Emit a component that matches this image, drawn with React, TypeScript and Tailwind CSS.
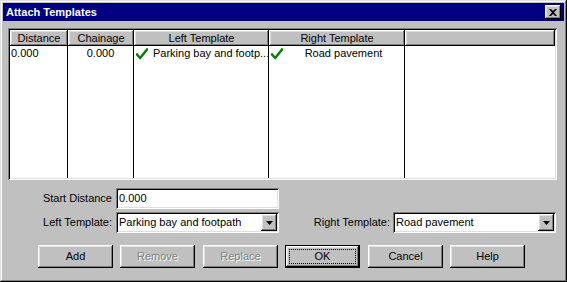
import React from "react";

const raised =
  "shadow-[inset_-1px_-1px_#000,inset_1px_1px_#fff,inset_-2px_-2px_#808080,inset_2px_2px_#dfdfdf]";
const sunken =
  "shadow-[inset_1px_1px_#808080,inset_-1px_-1px_#fff,inset_2px_2px_#000,inset_-2px_-2px_#dfdfdf]";

function Check() {
  return (
    <svg width="12" height="12" viewBox="0 0 12 12" className="shrink-0">
      <path d="M1 6.5 L4.2 10 L11 1.5" fill="none" stroke="#008000" strokeWidth="2.4" strokeLinecap="square" />
    </svg>
  );
}

function Arrow() {
  return (
    <svg width="7" height="4" viewBox="0 0 7 4">
      <path d="M0 0 H7 L3.5 4 Z" fill="#000" />
    </svg>
  );
}

function Combo({ value }: { value: string }) {
  return (
    <div className={`w-[163px] h-[21px] bg-white p-[2px] flex ${sunken}`}>
      <div className="flex-1 pl-[1px] flex items-center leading-none">{value}</div>
      <div className={`w-[16px] h-full bg-[#c0c0c0] flex items-center justify-center ${raised}`}>
        <Arrow />
      </div>
    </div>
  );
}

function Btn({ label, disabled, isDefault, className = "" }: { label: string; disabled?: boolean; isDefault?: boolean; className?: string }) {
  return (
    <div
      className={`relative w-[75px] h-[23px] bg-[#c0c0c0] flex items-center justify-center ${raised} ${
        isDefault ? "border border-black" : ""
      } ${className}`}
    >
      <span className={disabled ? "text-[#808080] [text-shadow:1px_1px_0_#fff]" : ""}>{label}</span>
      {isDefault && <div className="absolute inset-[3px] border border-dotted border-black" />}
    </div>
  );
}

const cols = [
  { name: "Distance", w: "w-[58px]" },
  { name: "Chainage", w: "w-[66px]" },
  { name: "Left Template", w: "w-[135px]" },
  { name: "Right Template", w: "w-[136px]" },
];

export default function App() {
  return (
    <div className="w-[567px] h-[282px] bg-[#c0c0c0] p-[3px] flex flex-col font-['Liberation_Sans',Arial,sans-serif] text-[11px] text-black shadow-[inset_-1px_-1px_#000,inset_1px_1px_#dfdfdf,inset_-2px_-2px_#808080,inset_2px_2px_#fff]">
      {/* title bar */}
      <div className="h-[18px] bg-[#000080] flex items-center justify-between pl-[3px] pr-[3px]">
        <span className="text-white font-bold text-[11px] leading-none">Attach Templates</span>
        <div className={`w-[16px] h-[14px] bg-[#c0c0c0] flex items-center justify-center ${raised}`}>
          <svg width="8" height="7" viewBox="0 0 8 7">
            <path d="M0 0 H2 L4 2 L6 0 H8 L5 3.5 L8 7 H6 L4 5 L2 7 H0 L3 3.5 Z" fill="#000" />
          </svg>
        </div>
      </div>

      <div className="flex flex-col px-[5px]">
        {/* list view */}
        <div className={`mt-[7px] h-[152px] w-[549px] bg-white p-[2px] flex flex-col ${sunken}`}>
          <div className="flex h-[16px] shrink-0">
            {cols.map((c) => (
              <div key={c.name} className={`${c.w} h-full bg-[#c0c0c0] flex items-center justify-center leading-none ${raised}`}>
                {c.name}
              </div>
            ))}
            <div className={`flex-1 h-full bg-[#c0c0c0] ${raised}`} />
          </div>
          <div className="flex flex-1">
            <div className="w-[58px] border-r border-black">
              <div className="h-[15px] pl-[1px] flex items-center">0.000</div>
            </div>
            <div className="w-[66px] border-r border-black">
              <div className="h-[15px] flex items-center justify-center">0.000</div>
            </div>
            <div className="w-[135px] border-r border-black">
              <div className="h-[15px] pl-[2px] flex items-center gap-[5px]">
                <Check />
                <span className="whitespace-nowrap">Parking bay and footp...</span>
              </div>
            </div>
            <div className="w-[136px] border-r border-black">
              <div className="h-[15px] pl-[2px] flex items-center">
                <Check />
                <span className="flex-1 text-center">Road pavement</span>
              </div>
            </div>
            <div className="flex-1" />
          </div>
        </div>

        {/* start distance */}
        <div className="mt-[8px] flex items-center">
          <div className="w-[108px] pr-[4px] text-right">Start Distance</div>
          <div className={`w-[163px] h-[21px] bg-white p-[2px] pl-[3px] flex items-center ${sunken}`}>0.000</div>
        </div>

        {/* templates */}
        <div className="mt-[3px] flex items-center">
          <div className="w-[108px] pr-[4px] text-right">Left Template:</div>
          <Combo value="Parking bay and footpath" />
          <div className="w-[114px] pr-[3px] text-right">Right Template:</div>
          <Combo value="Road pavement" />
        </div>

        {/* buttons */}
        <div className="mt-[12px] flex">
          <Btn label="Add" className="ml-[30px]" />
          <Btn label="Remove" disabled className="ml-[7px]" />
          <Btn label="Replace" disabled className="ml-[8px]" />
          <Btn label="OK" isDefault className="ml-[7px]" />
          <Btn label="Cancel" className="ml-[8px]" />
          <Btn label="Help" className="ml-[7px]" />
        </div>
      </div>
    </div>
  );
}
